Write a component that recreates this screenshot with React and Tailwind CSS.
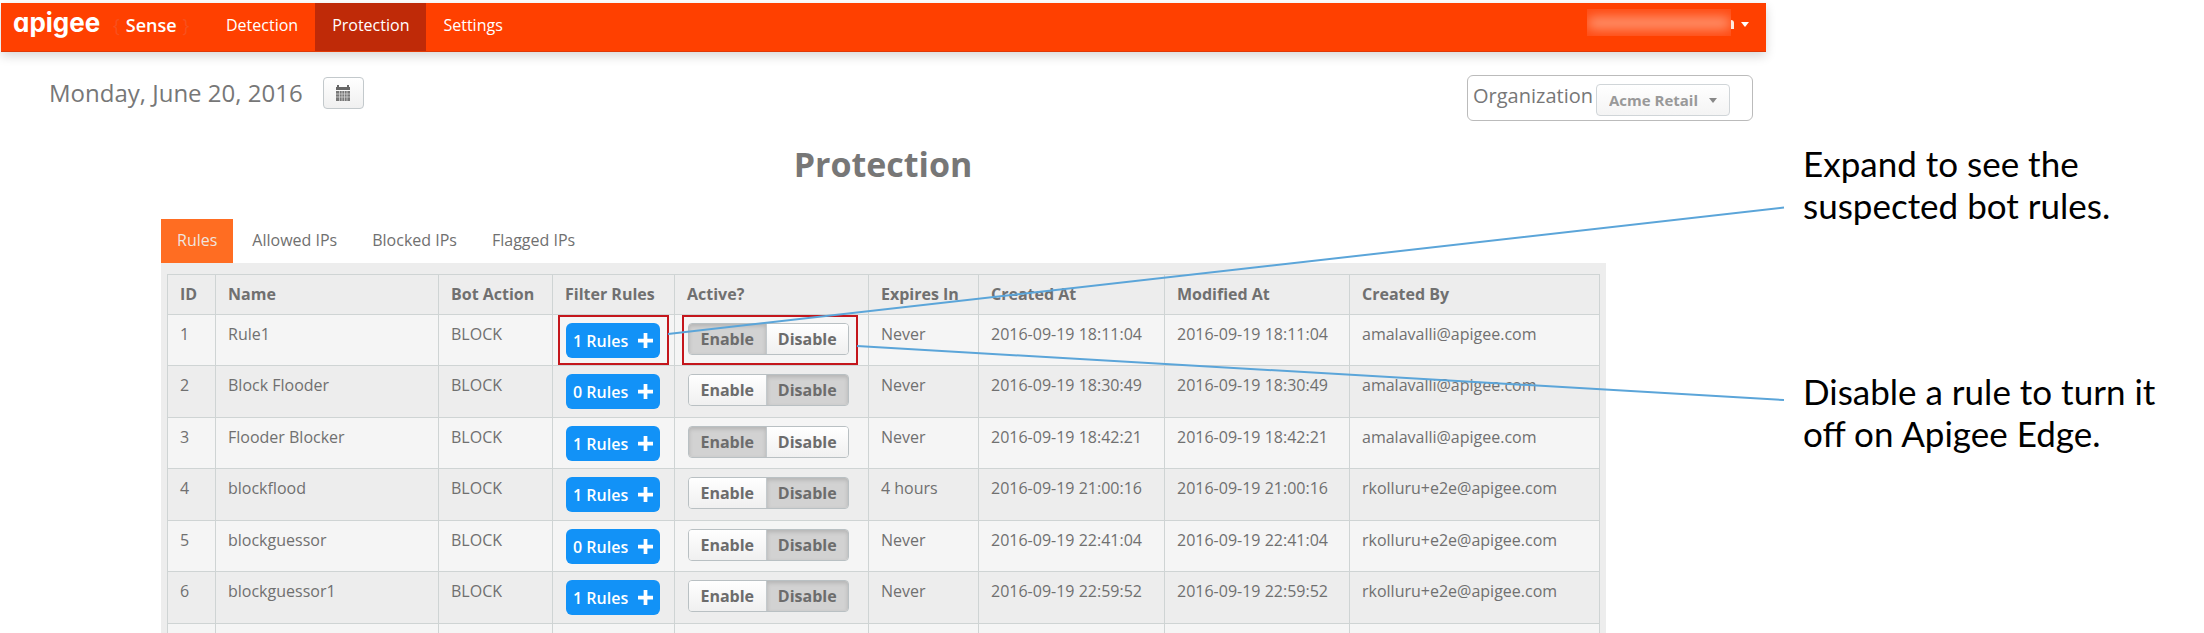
import React from "react";

const rules = [
  { id: 1, name: "Rule1", count: 1, enabled: true, expires: "Never", at: "2016-09-19 18:11:04", by: "amalavalli@apigee.com", marked: true },
  { id: 2, name: "Block Flooder", count: 0, enabled: false, expires: "Never", at: "2016-09-19 18:30:49", by: "amalavalli@apigee.com" },
  { id: 3, name: "Flooder Blocker", count: 1, enabled: true, expires: "Never", at: "2016-09-19 18:42:21", by: "amalavalli@apigee.com" },
  { id: 4, name: "blockflood", count: 1, enabled: false, expires: "4 hours", at: "2016-09-19 21:00:16", by: "rkolluru+e2e@apigee.com" },
  { id: 5, name: "blockguessor", count: 0, enabled: false, expires: "Never", at: "2016-09-19 22:41:04", by: "rkolluru+e2e@apigee.com" },
  { id: 6, name: "blockguessor1", count: 1, enabled: false, expires: "Never", at: "2016-09-19 22:59:52", by: "rkolluru+e2e@apigee.com" },
];

const columns = [
  { label: "ID", width: "w-[48px]" },
  { label: "Name", width: "w-[223px]" },
  { label: "Bot Action", width: "w-[114px]" },
  { label: "Filter Rules", width: "w-[122px]" },
  { label: "Active?", width: "w-[194px]" },
  { label: "Expires In", width: "w-[110px]" },
  { label: "Created At", width: "w-[186px]" },
  { label: "Modified At", width: "w-[185px]" },
  { label: "Created By", width: "w-auto" },
];

function Caret({ className }) {
  return (
    <svg viewBox="0 0 8 5" className={className} aria-hidden="true">
      <path d="M0 0h8L4 5z" fill="currentColor" />
    </svg>
  );
}

function CalendarIcon() {
  return (
    <svg viewBox="0 0 14 16" className="h-4 w-[14px]" aria-hidden="true">
      <path d="M0 2h1V0h2v2h8V0h2v2h1v3H0z" fill="#666" />
      <path d="M0 6h14v10H0z" fill="#777" />
      <path d="M3.500 6v10M6 6v10M8.500 6v10M11 6v10M0 9h14M0 12h14" stroke="#ddd" strokeWidth="0.7" />
    </svg>
  );
}

function Navbar() {
  const link = "flex h-12 items-center px-[17px] pb-1 text-white";
  return (
    <header className="ml-px mt-[3px] flex h-[49px] items-start border-b border-[#e03a08] bg-[#ff4000] text-base font-medium shadow-[0_4px_10px_rgba(0,0,0,0.16)]">
      <a href="#home" className="flex h-12 items-center pl-3 text-white">
        <span className="w-[100px] pb-2 font-[Inter,sans-serif] text-[26px] leading-none font-bold [font-feature-settings:'cv11']">apigee</span>
        <span className="flex w-24 gap-[6px] pb-1 text-lg font-semibold">
          <span className="font-normal text-[#f8501e]">{"{"}</span>
          <span>Sense</span>
          <span className="font-normal text-[#f8501e]">{"}"}</span>
        </span>
      </a>
      <nav className="flex">
        <a href="#detection" className={link}>Detection</a>
        <a href="#protection" aria-current="page" className={link + " bg-[#bf2a08]"}>Protection</a>
        <a href="#settings" className={link}>Settings</a>
      </nav>
      <button type="button" aria-label="Account" className="mt-[6px] mr-[17px] ml-auto flex items-center text-white">
        <span className="flex h-[27px] w-36 items-center overflow-hidden bg-[#ff4c14]">
          <span className="h-3 w-full rounded-full bg-[#ff9672] blur-[6px]" />
        </span>
        <span className="mt-1 h-[9px] w-[3px] rounded-tr bg-[#ffe9dc]" />
        <Caret className="mt-1 ml-[7px] h-[5px] w-2" />
      </button>
    </header>
  );
}

function Toolbar() {
  return (
    <div className="flex items-start justify-between pt-[23px] pr-[13px] pl-[49px] text-[#777]">
      <div className="flex items-center gap-5 pt-px">
        <h2 className="text-2xl leading-[34px]">Monday, June 20, 2016</h2>
        <button type="button" aria-label="Pick a date" className="flex h-8 w-[41px] items-center justify-center rounded border border-[#c3c9cc] bg-linear-to-b from-white to-[#f0f0f0]">
          <CalendarIcon />
        </button>
      </div>
      <div className="flex h-[46px] w-[286px] items-center gap-[3px] rounded-md border border-[#bbb] pl-[5px]">
        <label htmlFor="org" className="pb-1 text-xl">Organization</label>
        <span className="relative flex items-center pt-1">
          <select id="org" className="h-8 w-[134px] appearance-none rounded border border-[#d0d5d8] bg-linear-to-b from-white to-[#f4f4f4] pl-3 text-[15px] leading-none font-bold text-[#999]">
            <option>Acme Retail</option>
          </select>
          <Caret className="pointer-events-none absolute right-[13px] h-[5px] w-2 text-[#888]" />
        </span>
      </div>
    </div>
  );
}

function Tabs() {
  const tab = "h-11 px-4 pb-[2px] text-base";
  return (
    <div role="tablist" className="flex gap-[3px]">
      <button type="button" role="tab" aria-selected="true" className={tab + " bg-[#ff6d22] font-medium text-[#f0e4de]"}>Rules</button>
      <button type="button" role="tab" aria-selected="false" className={tab}>Allowed IPs</button>
      <button type="button" role="tab" aria-selected="false" className={tab}>Blocked IPs</button>
      <button type="button" role="tab" aria-selected="false" className={tab}>Flagged IPs</button>
    </div>
  );
}

function Toggle({ enabled }) {
  const on = " bg-[#d2d2d2] shadow-[inset_0_2px_4px_rgba(0,0,0,0.15)]";
  const off = " bg-linear-to-b from-white to-[#f0f0f0]";
  return (
    <div className="flex h-8 w-[161px] overflow-hidden rounded border border-[#b9c0c3] text-base font-bold text-[#6c6c6c]">
      <button type="button" aria-pressed={enabled} className={"flex-[77] border-r border-[#c3c9cc]" + (enabled ? on : off)}>Enable</button>
      <button type="button" aria-pressed={!enabled} className={"flex-[82]" + (enabled ? off : on)}>Disable</button>
    </div>
  );
}

function RulesTable() {
  const base = "border border-[#cfd4d4] pt-2 text-left align-top leading-[22px] whitespace-nowrap";
  const cell = base + " pl-3";
  const control = base + " relative pl-[13px]";
  const mark = "pointer-events-none absolute top-0 h-[50px] border-2 border-[#c4161c]";
  return (
    <table className="w-full table-fixed border-collapse text-base">
      <thead>
        <tr className="h-10">
          {columns.map((c) => (
            <th key={c.label} scope="col" className={cell + " font-bold " + c.width}>{c.label}</th>
          ))}
        </tr>
      </thead>
      <tbody>
        {rules.map((r) => (
          <tr key={r.id} className="h-[51px] bg-[#f5f5f5] even:h-[52px] even:bg-[#ededed]">
            <td className={cell}>{r.id}</td>
            <td className={cell}>{r.name}</td>
            <td className={cell}>BLOCK</td>
            <td className={control}>
              <button type="button" className="flex h-[35px] w-[94px] items-center justify-between rounded-md bg-[#1292f7] px-[7px] font-semibold text-white">
                {r.count} Rules
                <svg viewBox="0 0 16 16" className="h-[15px] w-[15px]" aria-hidden="true">
                  <path d="M8 0v16M0 8h16" stroke="currentColor" strokeWidth="4" />
                </svg>
              </button>
              {r.marked && <span className={mark + " left-[5px] w-[111px]"} />}
            </td>
            <td className={control}>
              <Toggle enabled={r.enabled} />
              {r.marked && <span className={mark + " left-[7px] w-[176px]"} />}
            </td>
            <td className={cell}>{r.expires}</td>
            <td className={cell}>{r.at}</td>
            <td className={cell}>{r.at}</td>
            <td className={cell}>{r.by}</td>
          </tr>
        ))}
        <tr className="h-[51px] bg-[#f5f5f5]">
          {columns.map((c) => (
            <td key={c.label} className={cell} />
          ))}
        </tr>
      </tbody>
    </table>
  );
}

export default function App() {
  return (
    <div className="relative flex h-screen overflow-hidden bg-white font-['Open_Sans',sans-serif]">
      <main className="flex min-w-0 flex-1 flex-col">
        <Navbar />
        <Toolbar />
        <h1 className="mt-[21px] text-center text-[34px] leading-[44px] font-bold text-[#777]">Protection</h1>
        <section className="mt-[33px] pr-40 pl-[161px] text-[#707070]">
          <Tabs />
          <div className="bg-[#ededed] px-[6px] pt-[11px]">
            <RulesTable />
          </div>
        </section>
      </main>
      <aside className="flex w-[438px] shrink-0 flex-col gap-36 pt-[142px] pl-[37px] font-[Lato,sans-serif] text-[35px] leading-[42px] text-black">
        <p>Expand to see the<br />suspected bot rules.</p>
        <p>Disable a rule to turn it<br />off on Apigee Edge.</p>
      </aside>
      <svg viewBox="0 0 2204 633" preserveAspectRatio="none" className="pointer-events-none absolute inset-0 h-full w-full" aria-hidden="true">
        <path d="M668 334L1784 207.500M857 346L1784 400" stroke="#5ba5d9" strokeWidth="2" fill="none" />
      </svg>
    </div>
  );
}
